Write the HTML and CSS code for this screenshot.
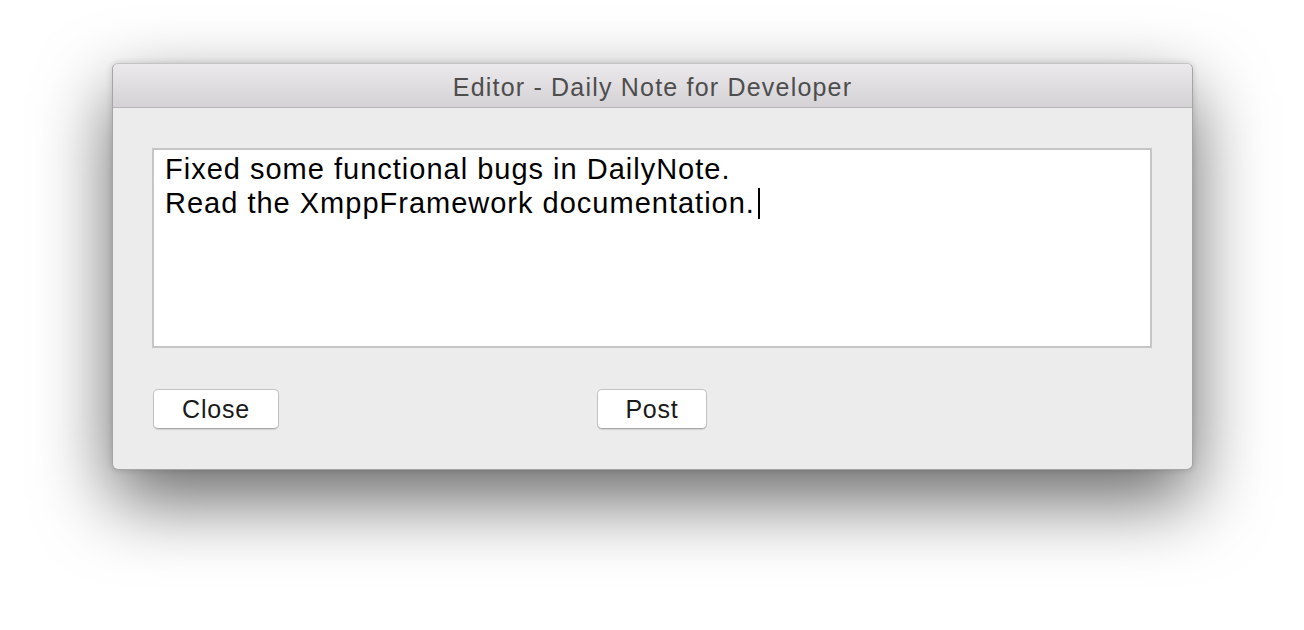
FILE: index.html
```html
<!DOCTYPE html>
<html>
<head>
<meta charset="utf-8">
<link rel="stylesheet" href="styles.css">
</head>
<body>
<div class="stage">
  <div class="window">
    <div class="titlebar">Editor - Daily Note for Developer</div>
    <div class="content">
      <div class="textarea">
        <div class="line">Fixed some functional bugs in DailyNote.</div>
        <div class="line">Read the XmppFramework documentation.<span class="caret"></span></div>
      </div>
      <div class="buttons">
        <div class="btn btn-close">Close</div>
        <div class="btn btn-post">Post</div>
      </div>
    </div>
  </div>
</div>
</body>
</html>
```
FILE: styles.css
```css
html, body {
  margin: 0;
  padding: 0;
  height: 100%;
  font-family: "Liberation Sans", Arial, sans-serif;
}
html {
  background: #ffffff;
}
.stage {
  height: 630px;
  box-sizing: border-box;
  padding-top: 63px;
  padding-left: 112px;
}
.window {
  width: 1081px;
  height: 407px;
  box-sizing: border-box;
  border: 1px solid #a5a5a5;
  border-top-color: #c4c4c4;
  border-radius: 6px;
  background: #ececec;
  overflow: hidden;
  box-shadow: 0 30px 75px rgba(0,0,0,0.6), 0 0 6px rgba(0,0,0,0.15);
  display: flex;
  flex-direction: column;
}
.titlebar {
  height: 44px;
  box-sizing: border-box;
  background: linear-gradient(#ebe9eb, #d4d2d4);
  border-bottom: 1px solid #b6b6b6;
  color: #4d4d4d;
  font-size: 25px;
  letter-spacing: 1.2px;
  line-height: 46px;
  text-align: center;
}
.content {
  padding: 40px 39px 0 39px;
  display: flex;
  flex-direction: column;
}
.textarea {
  width: 1000px;
  height: 200px;
  box-sizing: border-box;
  border: 2px solid #c6c6c6;
  background: #ffffff;
  padding: 2px 11px;
  color: #000000;
  font-size: 29px;
  letter-spacing: 1px;
  line-height: 34px;
}
.caret {
  display: inline-block;
  width: 2px;
  height: 31px;
  background: #000;
  vertical-align: -6px;
  margin-left: 3px;
}
.buttons {
  display: flex;
  margin-top: 41px;
  gap: 318px;
  padding-left: 1px;
}
.btn {
  height: 40px;
  box-sizing: border-box;
  background: #ffffff;
  border: 1px solid #c3c3c3;
  border-bottom-color: #a9a9a9;
  border-radius: 5px;
  box-shadow: 0 1px 1px rgba(0,0,0,0.12);
  color: #1a1a1a;
  font-size: 25px;
  letter-spacing: 0.8px;
  line-height: 39px;
  text-align: center;
}
.btn-close { width: 126px; }
.btn-post { width: 110px; }
```
